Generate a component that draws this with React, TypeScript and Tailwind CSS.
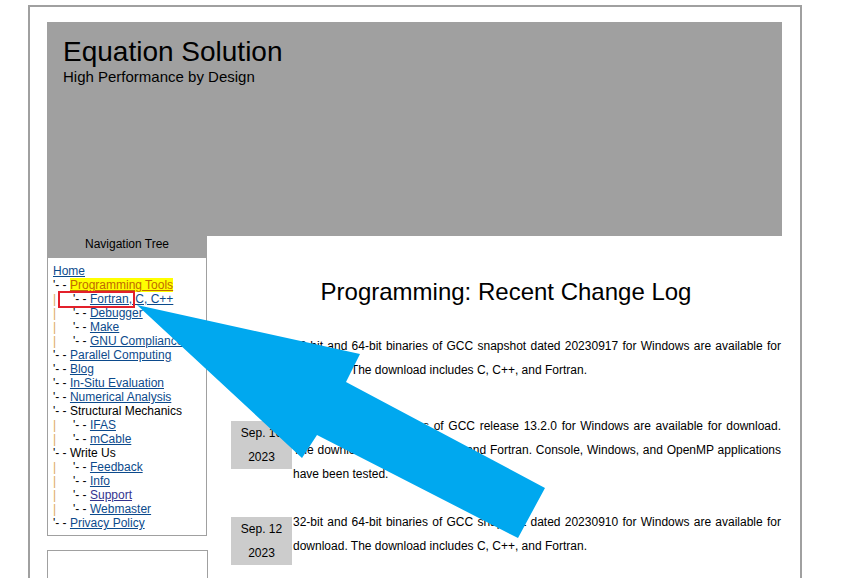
import React from "react";

type Item = {
  t: string;
  level: 0 | 1;
  kind?: "home" | "highlight" | "plain" | "visited";
};

const items: Item[] = [
  { t: "Home", level: 0, kind: "home" },
  { t: "Programming Tools", level: 0, kind: "highlight" },
  { t: "Fortran, C, C++", level: 1 },
  { t: "Debugger", level: 1 },
  { t: "Make", level: 1 },
  { t: "GNU Compliance", level: 1 },
  { t: "Parallel Computing", level: 0 },
  { t: "Blog", level: 0 },
  { t: "In-Situ Evaluation", level: 0 },
  { t: "Numerical Analysis", level: 0 },
  { t: "Structural Mechanics", level: 0, kind: "plain" },
  { t: "IFAS", level: 1 },
  { t: "mCable", level: 1 },
  { t: "Write Us", level: 0, kind: "plain" },
  { t: "Feedback", level: 1 },
  { t: "Info", level: 1 },
  { t: "Support", level: 1, kind: "visited" },
  { t: "Webmaster", level: 1 },
  { t: "Privacy Policy", level: 0 },
];

const entries = [
  {
    d: "Sep. 17",
    y: "2023",
    text: "32-bit and 64-bit binaries of GCC snapshot dated 20230917 for Windows are available for download. The download includes C, C++, and Fortran.",
  },
  {
    d: "Sep. 16",
    y: "2023",
    text: "32-bit and 64-bit binaries of GCC release 13.2.0 for Windows are available for download. The download includes C, C++, and Fortran. Console, Windows, and OpenMP applications have been tested.",
  },
  {
    d: "Sep. 12",
    y: "2023",
    text: "32-bit and 64-bit binaries of GCC snapshot dated 20230910 for Windows are available for download. The download includes C, C++, and Fortran.",
  },
];

function NavLine({ it }: { it: Item }) {
  const prefix = "'- - ";
  let label: React.ReactNode;
  if (it.kind === "highlight") {
    label = <span className="bg-[#ffff00] text-[#c06a00] underline">{it.t}</span>;
  } else if (it.kind === "plain") {
    label = <span>{it.t}</span>;
  } else if (it.kind === "visited") {
    label = <span className="text-[#33348f] underline">{it.t}</span>;
  } else {
    label = <span className="text-[#0c4a8c] underline">{it.t}</span>;
  }
  return (
    <div className="h-[14px] leading-[14px] whitespace-nowrap">
      {it.level === 1 && (
        <span className="inline-block w-[20px] text-[#dcaa62]">|</span>
      )}
      {it.kind !== "home" && <span className="whitespace-pre">{prefix}</span>}
      {label}
    </div>
  );
}

export default function App() {
  return (
    <div className="relative w-[847px] h-[578px] overflow-hidden bg-white text-black font-['Liberation_Sans',Arial,sans-serif]">
      <div className="ml-[28px] mt-[5px] w-[774px] h-[700px] border-2 border-[#a0a0a0] pt-[15px] pl-[17px]">
        <header className="w-[735px] h-[214px] bg-[#a0a0a0] pl-[16px] pt-[14px]">
          <div className="text-[28px] leading-[32px]">Equation Solution</div>
          <div className="text-[15px] leading-[17px]">High Performance by Design</div>
        </header>
        <div className="flex w-[735px]">
          <aside className="w-[160px] shrink-0">
            <div className="h-[22px] bg-[#a0a0a0] text-[12px] leading-[16px] text-center">
              Navigation Tree
            </div>
            <nav className="border border-t-0 border-[#a0a0a0] pt-[6px] pb-[5px] pl-[5px] text-[12px]">
              {items.map((it) => (
                <NavLine key={it.t} it={it} />
              ))}
            </nav>
            <div className="mt-[14px] w-[161px] h-[60px] border-[1.5px] border-[#a0a0a0]" />
          </aside>
          <main className="flex-1 pl-[24px] pr-[1px]">
            <h1 className="mt-[42px] text-[24px] leading-[28px] text-center">
              Programming: Recent Change Log
            </h1>
            <div className="mt-[28px] flex flex-col gap-[24.5px]">
              {entries.map((e) => (
                <div key={e.d} className="flex items-start">
                  <div className="mt-[7px] w-[61px] shrink-0 bg-[#cccccc] text-[12px] leading-[24px] text-center">
                    <div>{e.d}</div>
                    <div>{e.y}</div>
                  </div>
                  <p className="ml-[1px] flex-1 text-[12px] leading-[24px] text-justify">{e.text}</p>
                </div>
              ))}
            </div>
          </main>
        </div>
      </div>

      {/* annotation: red box */}
      <div className="absolute left-[58px] top-[291px] w-[77px] h-[17px] border-2 border-[#e3202b]" />

      {/* annotation: blue arrow */}
      <svg className="absolute left-0 top-0" width="847" height="578" viewBox="0 0 847 578">
        <polygon
          points="137,305 360,354 346,382 545,488 518,538 317,435 302,458"
          fill="#00a8ef"
        />
      </svg>
    </div>
  );
}
